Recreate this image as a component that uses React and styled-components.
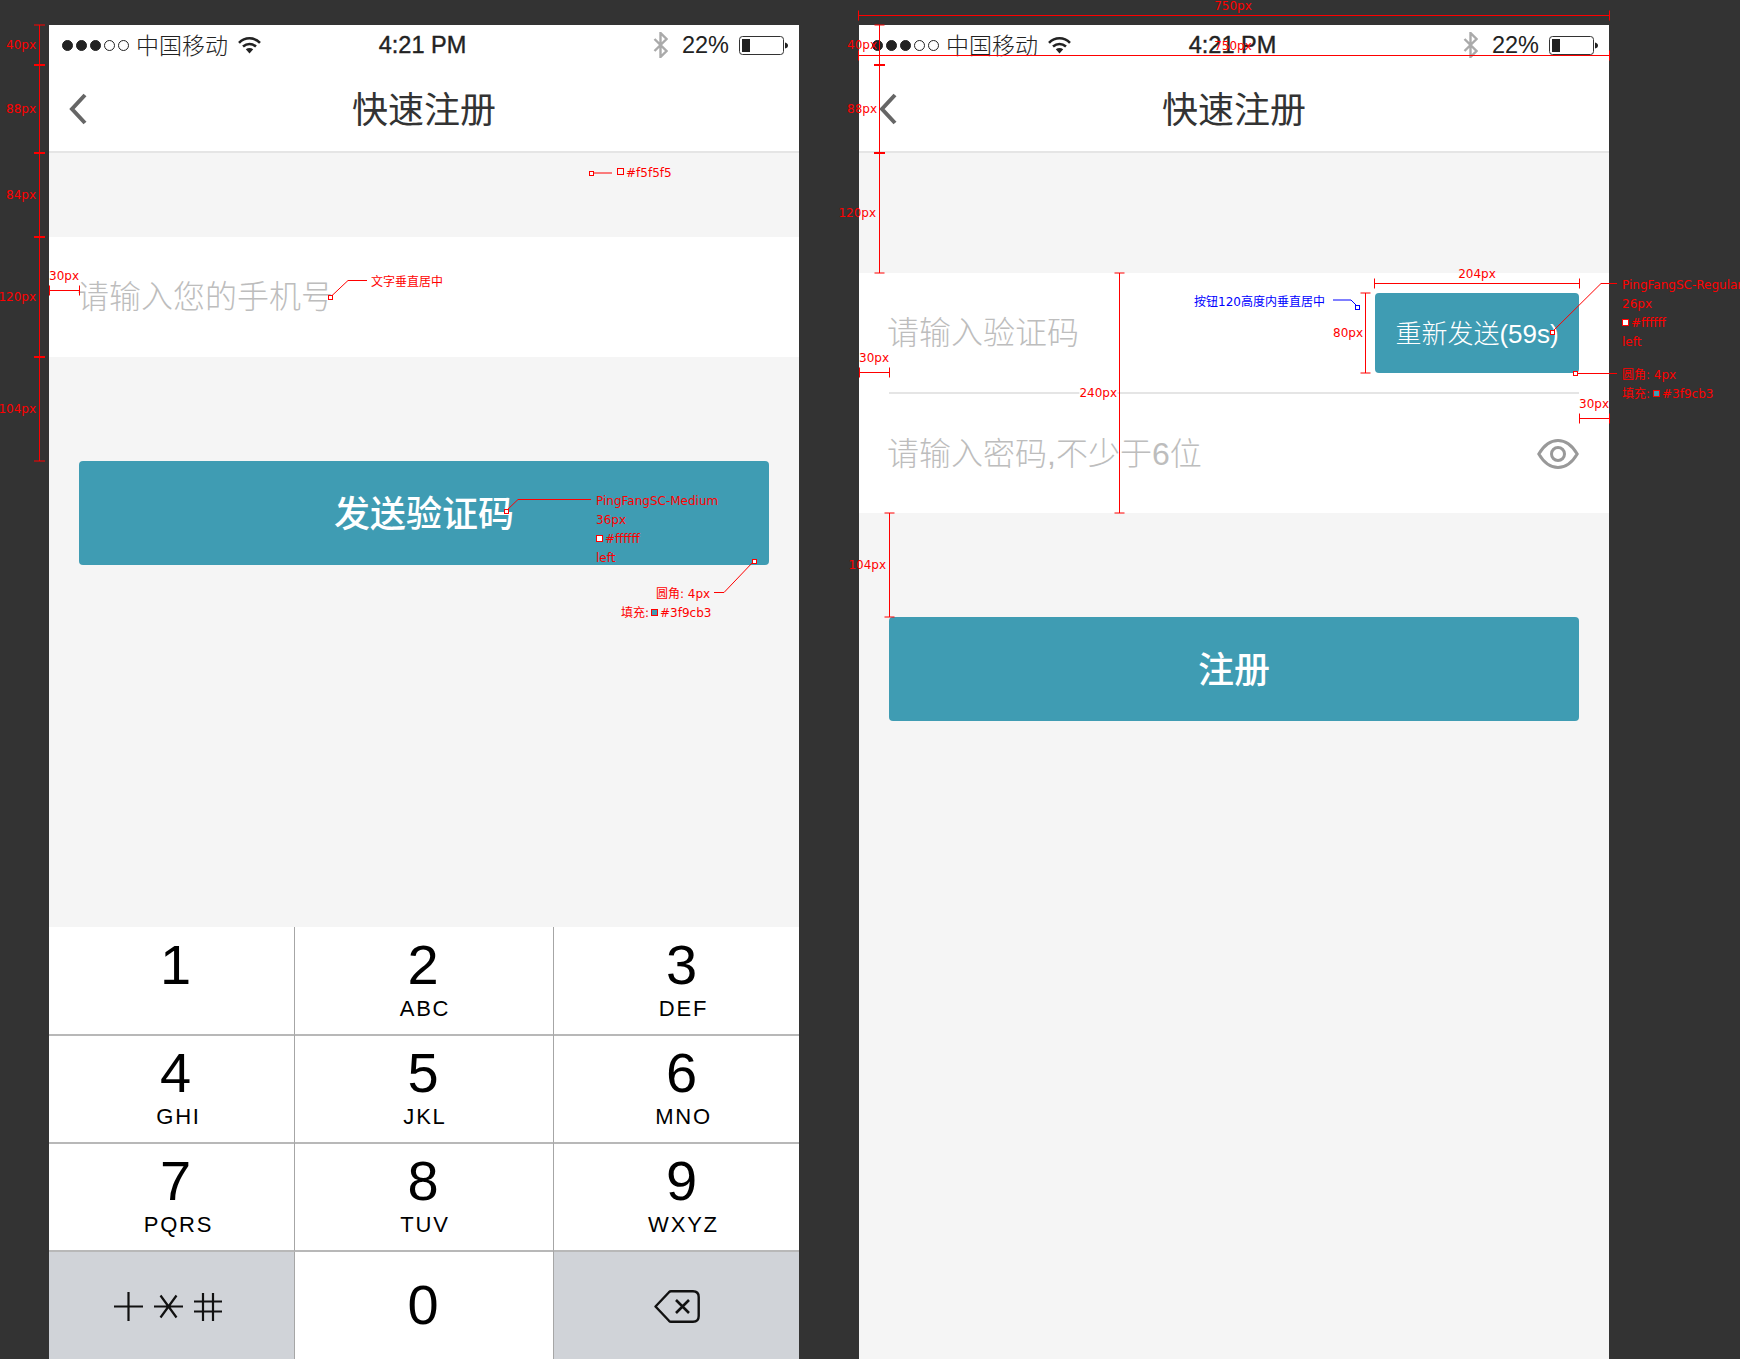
import React from 'react';
import styled, { createGlobalStyle } from 'styled-components';

const cjk = '"Liberation Sans", "Noto Sans CJK SC", sans-serif';

const GlobalStyle = createGlobalStyle`
  html, body {
    margin: 0;
    padding: 0;
    background: #333333;
  }
`;

const Page = styled.div`
  position: relative;
  width: 1740px;
  height: 1359px;
  overflow: hidden;
  background: #333333;
  display: flex;
  gap: 60px;
  padding: 25px 0 0 49px;
  box-sizing: border-box;
  font-family: ${cjk};
`;

const Phone = styled.div`
  width: 750px;
  height: 1334px;
  display: flex;
  flex-direction: column;
  background: #f5f5f5;
  flex-shrink: 0;
`;

const Status = styled.div`
  height: 40px;
  background: #fff;
  display: grid;
  grid-template-columns: 1fr auto 1fr;
  align-items: center;
  padding: 0 11px 0 13px;
  color: #222;
`;

const StatusLeft = styled.div`
  display: flex;
  align-items: center;
`;

const StatusRight = styled.div`
  display: flex;
  align-items: center;
  justify-content: flex-end;
`;

const Dot = styled.span`
  width: 11px;
  height: 11px;
  margin-right: 3px;
  border-radius: 50%;
  box-sizing: border-box;
  border: 1px solid #222;
  background: ${(p) => (p.$on ? '#222' : 'transparent')};
`;

const Carrier = styled.span`
  margin: -2px 10px 0 4px;
  font-family: "Noto Sans CJK SC", sans-serif;
  font-size: 23px;
  font-weight: 300;
  line-height: 30px;
`;

const Time = styled.span`
  font-size: 23.5px;
  line-height: 30px;
  margin-right: 5px;
  -webkit-text-stroke: 0.4px #222;
`;

const Percent = styled.span`
  margin: 0 10px 0 14px;
  font-size: 23.5px;
  line-height: 30px;
`;

const Nav = styled.div`
  height: 88px;
  box-sizing: border-box;
  border-bottom: 2px solid #e5e5e5;
  background: #fff;
  display: grid;
  grid-template-columns: 1fr auto 1fr;
  align-items: center;
  padding: 2px 0 0 20px;
`;

const Title = styled.div`
  font-family: "Noto Sans CJK SC", sans-serif;
  font-size: 36px;
  line-height: 50px;
  color: #333;
  margin: -4px 0 0 -20px;
`;

const Card = styled.div`
  margin-top: ${(p) => p.$top}px;
  background: #fff;
  display: flex;
  flex-direction: column;
`;

const Field = styled.div`
  height: ${(p) => p.$height || 120}px;
  margin: 0 30px;
  padding-top: ${(p) => (p.$line ? 1 : 0)}px;
  box-sizing: border-box;
  display: flex;
  align-items: center;
  justify-content: space-between;
  border-bottom: ${(p) => (p.$line ? '2px solid #e5e5e5' : 'none')};
`;

const Placeholder = styled.span`
  margin-left: -2px;
  font-size: 32px;
  font-weight: 300;
  line-height: 44px;
  color: #bdbdbd;
  font-family: ${cjk};
`;

const ResendButton = styled.div`
  width: 204px;
  height: 80px;
  box-sizing: border-box;
  padding-bottom: 3px;
  border-radius: 4px;
  background: #3f9cb3;
  color: #fff;
  font-size: 26px;
  font-weight: 300;
  display: flex;
  align-items: center;
  justify-content: center;
`;

const MainButton = styled.div`
  height: 104px;
  box-sizing: border-box;
  padding-bottom: 4px;
  margin: 104px 30px 0;
  border-radius: 4px;
  background: #3f9cb3;
  color: #fff;
  font-family: "Noto Sans CJK SC", sans-serif;
  font-size: 36px;
  font-weight: 500;
  display: flex;
  align-items: center;
  justify-content: center;
`;

const Keypad = styled.div`
  margin-top: auto;
  height: 432px;
  display: grid;
  grid-template-columns: 246px 259px 245px;
  grid-auto-rows: 108px;
  background: #fff;
  color: #000;
`;

const Key = styled.div`
  box-sizing: border-box;
  height: ${(p) => (p.$last ? '100%' : 'calc(100% + 1px)')};
  display: flex;
  flex-direction: column;
  align-items: center;
  padding-top: ${(p) => (p.$last ? 26 : 10)}px;
  padding-left: ${(p) => (p.$col === 1 ? 0 : 12)}px;
  border-right: ${(p) => (p.$col === 2 ? 'none' : '1px solid #a6a6a6')};
  border-bottom: ${(p) => (p.$last ? 'none' : '2px solid #b8b8b8')};
`;

const Digit = styled.span`
  font-size: 56px;
  line-height: 56px;
  margin-right: ${(p) => (p.$col === 0 ? 4 : 2)}px;
`;

const Letters = styled.span`
  margin: 5px 0 0 2px;
  font-size: 22px;
  line-height: 22px;
  letter-spacing: 1.8px;
`;

const SpecialKey = styled.div`
  box-sizing: border-box;
  margin-top: 1px;
  background: #d0d3d8;
  display: flex;
  align-items: center;
  justify-content: center;
  padding-top: 2px;
  padding-right: ${(p) => p.$pad || 0}px;
  border-right: ${(p) => (p.$col === 2 ? 'none' : '1px solid #a6a6a6')};
`;

/* redline layer: measurements lie over the two screens */
const Overlay = styled.svg`
  position: absolute;
  top: 0;
  left: 0;
  pointer-events: none;
`;

const Note = styled.span`
  position: absolute;
  left: ${(p) => p.$x}px;
  top: ${(p) => p.$y}px;
  transform: translate(${(p) => (p.$align === 'end' ? '-100%' : p.$align === 'center' ? '-50%' : '0')}, -50%);
  font-family: "DejaVu Sans", "Noto Sans CJK SC", sans-serif;
  font-size: 12px;
  line-height: 14px;
  white-space: nowrap;
  color: ${(p) => (p.$blue ? '#0000ff' : '#ff0000')};
  background: ${(p) => (p.$mask ? '#fff' : 'transparent')};
`;

const Swatch = styled.span`
  position: absolute;
  left: ${(p) => p.$x}px;
  top: ${(p) => p.$y - 4}px;
  width: 7px;
  height: 7px;
  box-sizing: border-box;
  border: 1px solid #ff0000;
  background: ${(p) => p.$fill};
`;

const hRule = (x1, x2, y, t = 5) => `M${x1} ${y}H${x2}M${x1} ${y - t}V${y + t}M${x2} ${y - t}V${y + t}`;
const vRule = (x, y1, y2, t = 5) => `M${x} ${y1}V${y2}M${x - t} ${y1}H${x + t}M${x - t} ${y2}H${x + t}`;

const redLines = [
  // left screen
  'M39.5 25V461M34 25H45M34 461H45',
  hRule(49.5, 79.5, 290.5),
  'M330.5 297L348 280.5H367',
  'M594 173H612',
  'M506 511L518 499.5H591',
  'M754 561L724 592.5H714',
  // right screen
  hRule(858.5, 1609.5, 15.5),
  hRule(858.5, 1609.5, 55.5),
  vRule(879.5, 25, 273),
  hRule(859.5, 889.5, 372.5),
  vRule(1119.5, 273, 513),
  vRule(889.5, 513, 617),
  hRule(1374.5, 1579.5, 283.5),
  vRule(1365.5, 293, 373),
  'M1552 332L1601 283.5H1617',
  'M1578 373.5H1617',
  hRule(1579.5, 1609.5, 418.5),
];

const thickTicks = [
  'M34 65H45M34 153H45M34 237H45M34 357H45',
  'M874 65H885M874 153H885',
];

const redSquares = [
  [328, 295], [589, 171], [504, 509], [752, 559], [1550, 330], [1573, 371],
];

const notes = [
  { x: 36, y: 45, align: 'end', text: '40px' },
  { x: 36, y: 109, align: 'end', text: '88px' },
  { x: 36, y: 195, align: 'end', text: '84px' },
  { x: 36, y: 297, align: 'end', text: '120px' },
  { x: 36, y: 409, align: 'end', text: '104px' },
  { x: 49, y: 276, text: '30px' },
  { x: 371, y: 282, text: '文字垂直居中' },
  { x: 626, y: 173, text: '#f5f5f5' },
  { x: 596, y: 501, text: 'PingFangSC-Medium' },
  { x: 596, y: 520, text: '36px' },
  { x: 605, y: 539, text: '#ffffff' },
  { x: 596, y: 558, text: 'left' },
  { x: 656, y: 594, text: '圆角: 4px' },
  { x: 621, y: 613, text: '填充:' },
  { x: 660, y: 613, text: '#3f9cb3' },
  { x: 1233, y: 6, align: 'center', text: '750px' },
  { x: 1233, y: 46, align: 'center', text: '750px' },
  { x: 877, y: 45, align: 'end', text: '40px' },
  { x: 877, y: 109, align: 'end', text: '88px' },
  { x: 876, y: 213, align: 'end', text: '120px' },
  { x: 859, y: 358, text: '30px' },
  { x: 1117, y: 393, align: 'end', mask: true, text: '240px' },
  { x: 886, y: 565, align: 'end', text: '104px' },
  { x: 1477, y: 274, align: 'center', text: '204px' },
  { x: 1363, y: 333, align: 'end', text: '80px' },
  { x: 1194, y: 302, blue: true, text: '按钮120高度内垂直居中' },
  { x: 1622, y: 285, text: 'PingFangSC-Regular' },
  { x: 1622, y: 304, text: '26px' },
  { x: 1631, y: 323, text: '#ffffff' },
  { x: 1622, y: 342, text: 'left' },
  { x: 1622, y: 375, text: '圆角: 4px' },
  { x: 1622, y: 394, text: '填充:' },
  { x: 1662, y: 394, text: '#3f9cb3' },
  { x: 1579, y: 404, text: '30px' },
];

const swatches = [
  { x: 617, y: 172, fill: '#f5f5f5' },
  { x: 596, y: 539, fill: '#ffffff' },
  { x: 651, y: 613, fill: '#3f9cb3' },
  { x: 1622, y: 323, fill: '#ffffff' },
  { x: 1653, y: 394, fill: '#3f9cb3' },
];

const keys = [
  ['1', ''], ['2', 'ABC'], ['3', 'DEF'],
  ['4', 'GHI'], ['5', 'JKL'], ['6', 'MNO'],
  ['7', 'PQRS'], ['8', 'TUV'], ['9', 'WXYZ'],
];

const Wifi = () => (
  <svg width="23" height="18" viewBox="0 0 23 18" fill="none" stroke="#222" strokeWidth="2.6">
    <path d="M1 6.8C7 .8 16 .8 22 6.8" />
    <path d="M5 10.6C9 7.2 14 7.2 18 10.6" />
    <path d="M7.8 13.2Q11.5 10.6 15.2 13.2L11.5 17.6Z" fill="#222" stroke="none" />
  </svg>
);

const Bluetooth = () => (
  <svg width="15" height="26" viewBox="0 0 15 26" fill="none" stroke="#aaa" strokeWidth="2.4">
    <path d="M1.5 7L13.5 19L7.5 25V1L13.5 7L1.5 19" />
  </svg>
);

const Battery = () => (
  <svg width="49" height="19" viewBox="0 0 49 19">
    <rect x=".5" y=".5" width="44" height="18" rx="3" fill="none" stroke="#333" />
    <rect x="3" y="3" width="8" height="13" fill="#222" />
    <path d="M46 6.5C48 7 49 8 49 9.5S48 12 46 12.5Z" fill="#222" />
  </svg>
);

const Back = () => (
  <svg width="18" height="32" viewBox="0 0 18 32" fill="none" stroke="#666" strokeWidth="4">
    <path d="M16 2L3 16L16 30" />
  </svg>
);

const Eye = () => (
  <svg width="42" height="30" viewBox="0 0 42 30" fill="none" stroke="#999" strokeWidth="3">
    <path d="M1.8 15C8 4.5 14 1.5 21 1.5S34 4.5 40.2 15C34 25.5 28 28.5 21 28.5S8 25.5 1.8 15Z" />
    <circle cx="21" cy="15" r="6.5" />
  </svg>
);

const Symbols = () => (
  <svg width="108" height="29" viewBox="0 0 108 29" fill="none" stroke="#111" strokeWidth="2.2">
    <path d="M0 14.5H29M14.5 0V29" />
    <path d="M40 14.5H69M46.5 3.5L62.5 25.5M62.5 3.5L46.5 25.5" />
    <path d="M80 9.5H108M80 19.5H108M89 1V29M99 1V29" />
  </svg>
);

const Delete = () => (
  <svg width="46" height="33" viewBox="0 0 46 33" fill="none" stroke="#111" strokeWidth="2.4" strokeLinejoin="round">
    <path d="M1.5 16.5L15 2.2C15.6 1.6 16.2 1.3 17 1.3H39C42.5 1.3 44.7 3.5 44.7 7V26C44.7 29.5 42.5 31.7 39 31.7H17C16.2 31.7 15.6 31.4 15 30.8Z" />
    <path d="M22 10L35 23M35 10L22 23" strokeWidth="2.6" />
  </svg>
);

const StatusBar = () => (
  <Status>
    <StatusLeft>
      <Dot $on /><Dot $on /><Dot $on /><Dot /><Dot />
      <Carrier>中国移动</Carrier>
      <Wifi />
    </StatusLeft>
    <Time>4:21 PM</Time>
    <StatusRight>
      <Bluetooth />
      <Percent>22%</Percent>
      <Battery />
    </StatusRight>
  </Status>
);

const NavBar = () => (
  <Nav>
    <Back />
    <Title>快速注册</Title>
  </Nav>
);

const App = () => (
  <Page>
    <GlobalStyle />

    <Phone>
      <StatusBar />
      <NavBar />
      <Card $top={84}>
        <Field>
          <Placeholder>请输入您的手机号</Placeholder>
        </Field>
      </Card>
      <MainButton>发送验证码</MainButton>
      <Keypad>
        {keys.map(([digit, letters], i) => (
          <Key key={digit} $col={i % 3}>
            <Digit $col={i % 3}>{digit}</Digit>
            {letters && <Letters>{letters}</Letters>}
          </Key>
        ))}
        <SpecialKey $col={0} $pad={8}>
          <Symbols />
        </SpecialKey>
        <Key $col={1} $last>
          <Digit $col={1}>0</Digit>
        </Key>
        <SpecialKey $col={2}>
          <Delete />
        </SpecialKey>
      </Keypad>
    </Phone>

    <Phone>
      <StatusBar />
      <NavBar />
      <Card $top={120}>
        <Field $line $height={121}>
          <Placeholder>请输入验证码</Placeholder>
          <ResendButton>重新发送(59s)</ResendButton>
        </Field>
        <Field $height={119}>
          <Placeholder>请输入密码,不少于6位</Placeholder>
          <Eye />
        </Field>
      </Card>
      <MainButton>注册</MainButton>
    </Phone>

    <Overlay width="1740" height="1359" fill="none">
      <path d={redLines.join('')} stroke="#ff0000" />
      <path d={thickTicks.join('')} stroke="#ff0000" strokeWidth="2" />
      <path d="M1333 300H1351L1357 306" stroke="#0000ff" />
      <rect x="1355.5" y="305.5" width="4" height="4" fill="#fff" stroke="#0000ff" />
      {redSquares.map(([x, y]) => (
        <rect key={x} x={x + 0.5} y={y + 0.5} width="4" height="4" fill="#fff" stroke="#ff0000" />
      ))}
    </Overlay>
    {notes.map((n) => (
      <Note key={`${n.x}-${n.y}`} $x={n.x} $y={n.y} $align={n.align} $blue={n.blue} $mask={n.mask}>
        {n.text}
      </Note>
    ))}
    {swatches.map((s) => (
      <Swatch key={s.x} $x={s.x} $y={s.y} $fill={s.fill} />
    ))}
  </Page>
);

export default App;
